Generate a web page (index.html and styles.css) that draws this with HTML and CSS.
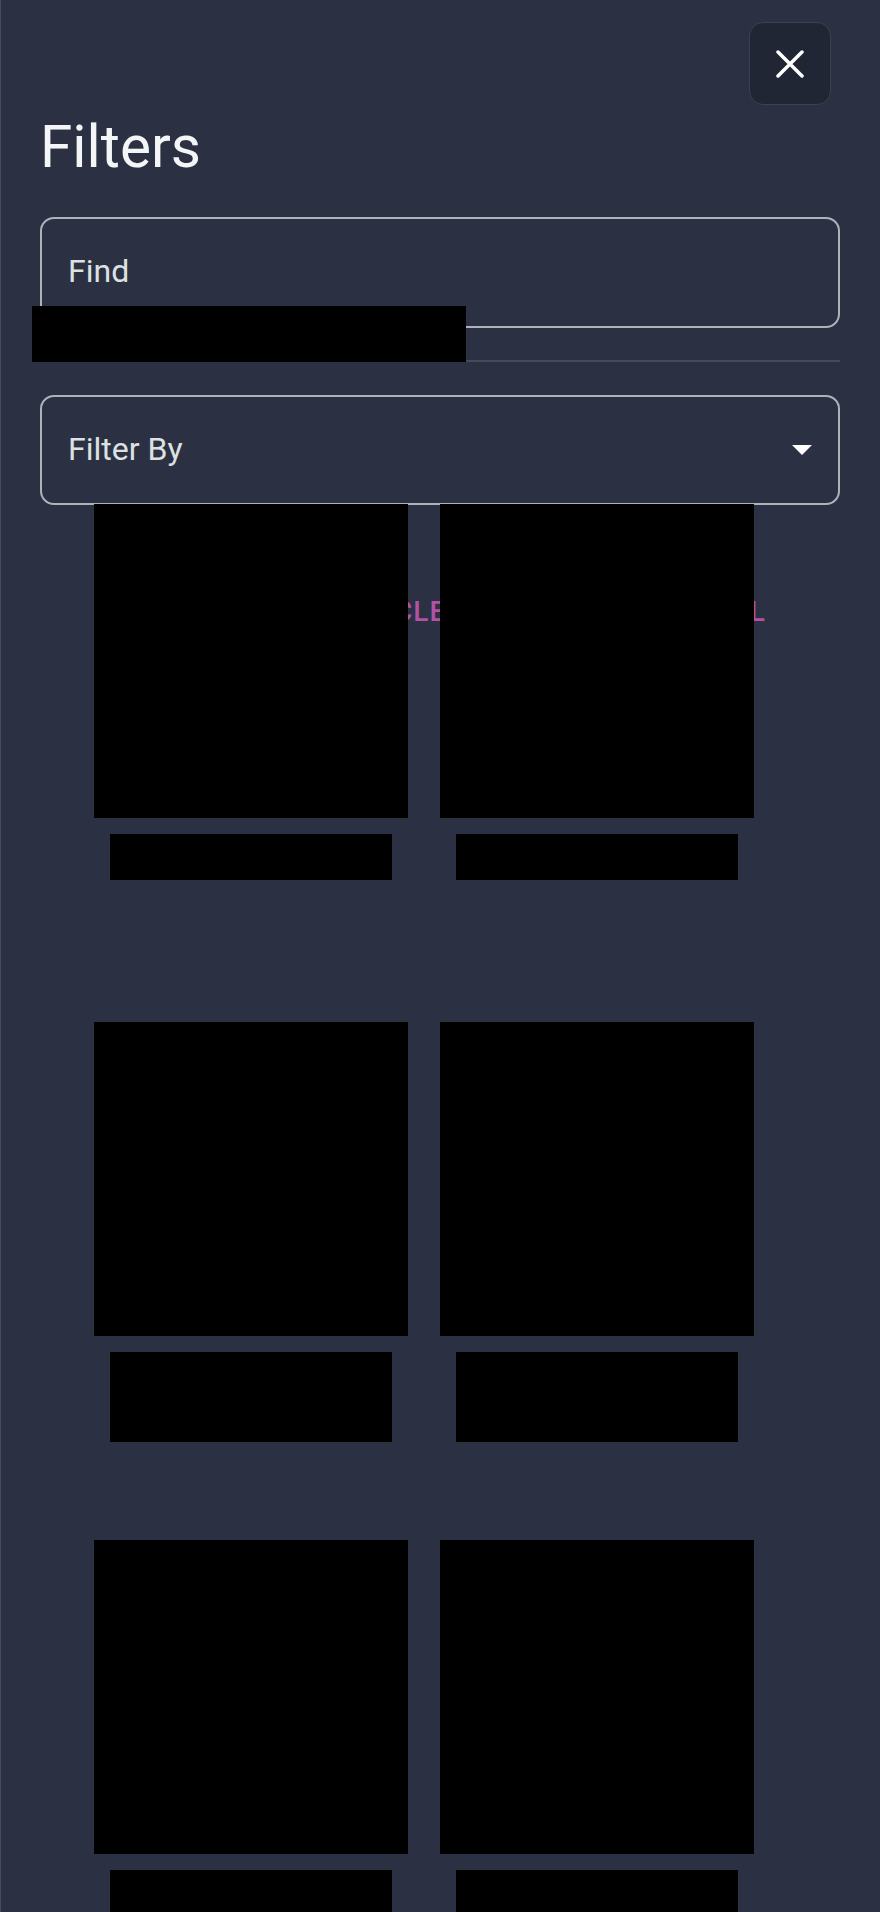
FILE: index.html
```html
<!DOCTYPE html>
<html lang="en">
<head>
<meta charset="utf-8">
<title>Filters</title>
<link rel="stylesheet" href="styles.css">
</head>
<body>
<div class="panel">
  <div class="top-bar">
    <button class="close-btn" aria-label="Close">
      <svg width="28" height="28" viewBox="0 0 28 28"><path d="M2 2 L26 26 M26 2 L2 26" stroke="#ffffff" stroke-width="3.5" stroke-linecap="round" fill="none"/></svg>
    </button>
  </div>
  <h1 class="title">Filters</h1>
  <div class="search-block">
    <div class="field"><span class="field-text">Find</span></div>
    <div class="redact redact-chip"></div>
    <div class="divider"></div>
  </div>
  <div class="field select"><span class="field-text">Filter By</span><span class="caret"></span></div>
  <div class="results">
    <div class="actions"><span class="action">CLEAR</span><span class="action">CANCEL</span></div>
    <div class="grid">
      <div class="card"><div class="thumb"></div><div class="label one"></div></div>
      <div class="card"><div class="thumb"></div><div class="label one"></div></div>
      <div class="card"><div class="thumb"></div><div class="label two"></div></div>
      <div class="card"><div class="thumb"></div><div class="label two"></div></div>
      <div class="card"><div class="thumb"></div><div class="label two"></div></div>
      <div class="card"><div class="thumb"></div><div class="label two"></div></div>
    </div>
  </div>
</div>
</body>
</html>
```

FILE: styles.css
```css
html, body {
  margin: 0;
  padding: 0;
  background: #2b3143;
}
body {
  font-family: Roboto, "Liberation Sans", sans-serif;
  color: #f2f3f5;
}
.panel {
  min-height: 1912px;
  box-sizing: border-box;
  border-left: 1px solid #464c5d;
  padding: 22px 40px 0 39px;
  background: #2b3143;
}
.top-bar {
  display: flex;
  justify-content: flex-end;
  padding-right: 9px;
}
.close-btn {
  width: 82px;
  height: 83px;
  box-sizing: border-box;
  border: 1px solid #3b4151;
  border-radius: 14px;
  background: #212634;
  display: flex;
  align-items: center;
  justify-content: center;
  padding: 0;
  cursor: pointer;
}
.close-btn svg { display: block; }
.title {
  margin: 12.5px 0 0 0;
  font-size: 58.5px;
  line-height: 58.5px;
  font-weight: 400;
  color: #f4f5f6;
  letter-spacing: 0;
}
.search-block {
  position: relative;
  margin-top: 41px;
}
.field {
  height: 111px;
  box-sizing: border-box;
  border: 2px solid #aeb2ba;
  border-radius: 14px;
  display: flex;
  align-items: center;
  padding: 0 26px 3px 26px;
}
.field-text {
  font-size: 32px;
  color: #dde1e2;
}
.redact {
  background: #000;
}
.redact-chip {
  position: absolute;
  left: -8px;
  top: 89px;
  width: 434px;
  height: 56px;
}
.divider {
  margin-top: 32px;
  height: 2px;
  background: #454b5c;
}
.select {
  margin-top: 33px;
  height: 110px;
  justify-content: space-between;
}
.caret {
  width: 0;
  height: 0;
  border-left: 10px solid transparent;
  border-right: 10px solid transparent;
  border-top: 10px solid #ffffff;
  margin-top: 3px;
}
.results {
  position: relative;
  margin-top: -1px;
}
.actions {
  position: absolute;
  left: 354px;
  top: 94px;
  width: 372px;
  display: flex;
  justify-content: space-between;
  z-index: 0;
}
.action {
  font-size: 28px;
  line-height: 28px;
  font-weight: 500;
  letter-spacing: 1px;
  color: #b152a7;
}
.grid {
  position: relative;
  z-index: 1;
  display: grid;
  grid-template-columns: 314px 314px;
  column-gap: 32px;
  row-gap: 32px;
  padding-left: 54px;
}
.card {
  height: 486px;
  display: flex;
  flex-direction: column;
  align-items: center;
}
.thumb {
  width: 314px;
  height: 314px;
  background: #000;
}
.label {
  margin-top: 16px;
  width: 282px;
  background: #000;
}
.label.one { height: 46px; }
.label.two { height: 90px; }
```
